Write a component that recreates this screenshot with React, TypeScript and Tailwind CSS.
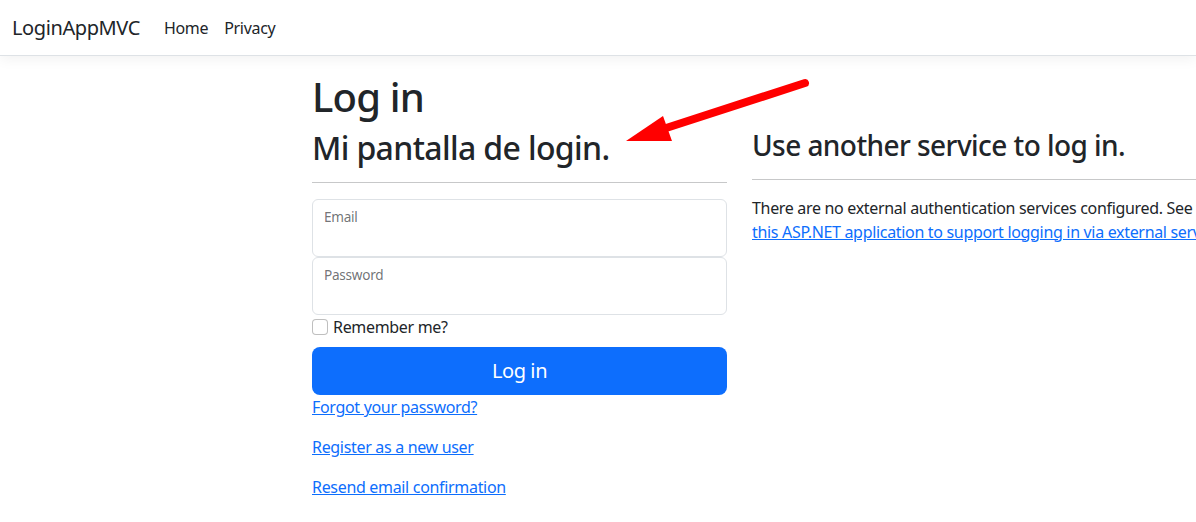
import React from "react";

const font = { fontFamily: '"Noto Sans", "Open Sans", sans-serif' };

const FloatingField: React.FC<{ label: string; type: string }> = ({ label, type }) => (
  <div className="relative">
    <input
      type={type}
      className="block h-[58px] w-full rounded-md border border-[#dee2e6] bg-white px-3 pt-[26px] pb-[10px] text-base text-[#212529] outline-none"
    />
    <label className="pointer-events-none absolute left-[12px] top-[6px] text-[13.6px] leading-6 tracking-[-0.02em] text-[#212529]/65">
      {label}
    </label>
  </div>
);

export default function App() {
  return (
    <div className="relative min-h-[522px] w-[1196px] overflow-hidden bg-white tracking-[-0.02em] text-[#212529]" style={font}>
      <header className="flex h-[56px] items-center border-b border-[#dee2e6] bg-white px-3 shadow-[0_4px_12px_rgba(0,0,0,0.05)]">
        <span className="mr-4 text-[20px] leading-[30px] tracking-[-0.02em]">LoginAppMVC</span>
        <nav className="flex text-base">
          <a className="px-2 leading-6">Home</a>
          <a className="px-2 leading-6">Privacy</a>
        </nav>
      </header>

      <main className="pt-[17px] pl-[312px]">
        <h1 className="mb-2 text-[40px] font-medium leading-[48px] tracking-[-0.02em]">Log in</h1>
        <div className="flex">
          <section className="w-[415px] shrink-0">
            <h2 className="mb-2 text-[32px] font-medium leading-[38.4px] tracking-[-0.02em]">Mi pantalla de login.</h2>
            <hr className="mt-[15px] mb-4 border-t border-[#212529]/25" />
            <FloatingField label="Email" type="email" />
            <FloatingField label="Password" type="password" />
            <label className="mb-2 flex items-center text-base leading-6">
              <span className="mr-[5px] inline-block h-4 w-4 rounded border border-black/25 bg-white" />
              Remember me?
            </label>
            <button className="h-12 w-full rounded-lg bg-[#0d6efd] text-[20px] tracking-[-0.02em] text-white">Log in</button>
            <div className="text-base leading-6">
              <p className="mb-4"><a className="text-[#0d6efd] underline">Forgot your password?</a></p>
              <p className="mb-4"><a className="text-[#0d6efd] underline">Register as a new user</a></p>
              <p className="mb-4"><a className="text-[#0d6efd] underline">Resend email confirmation</a></p>
            </div>
          </section>
          <section className="ml-[25px] w-[636px] shrink-0">
            <h3 className="mb-2 text-[28px] font-medium leading-[33.6px] tracking-[-0.02em]">Use another service to log in.</h3>
            <hr className="mt-4 mb-4 border-t border-[#212529]/25" />
            <p className="whitespace-nowrap text-base leading-6">
              There are no external authentication services configured. See this{" "}
              <a className="text-[#0d6efd] underline">
                article about setting up
                <br />
                this ASP.NET application to support logging in via external services
              </a>
              .
            </p>
          </section>
        </div>
      </main>

      <svg className="pointer-events-none absolute left-0 top-0" width="1196" height="522">
        <line x1="805" y1="83" x2="660" y2="130" stroke="#ff0000" strokeWidth="8" strokeLinecap="round" />
        <polygon points="626,141 663,116 672,141" fill="#ff0000" />
      </svg>
    </div>
  );
}
